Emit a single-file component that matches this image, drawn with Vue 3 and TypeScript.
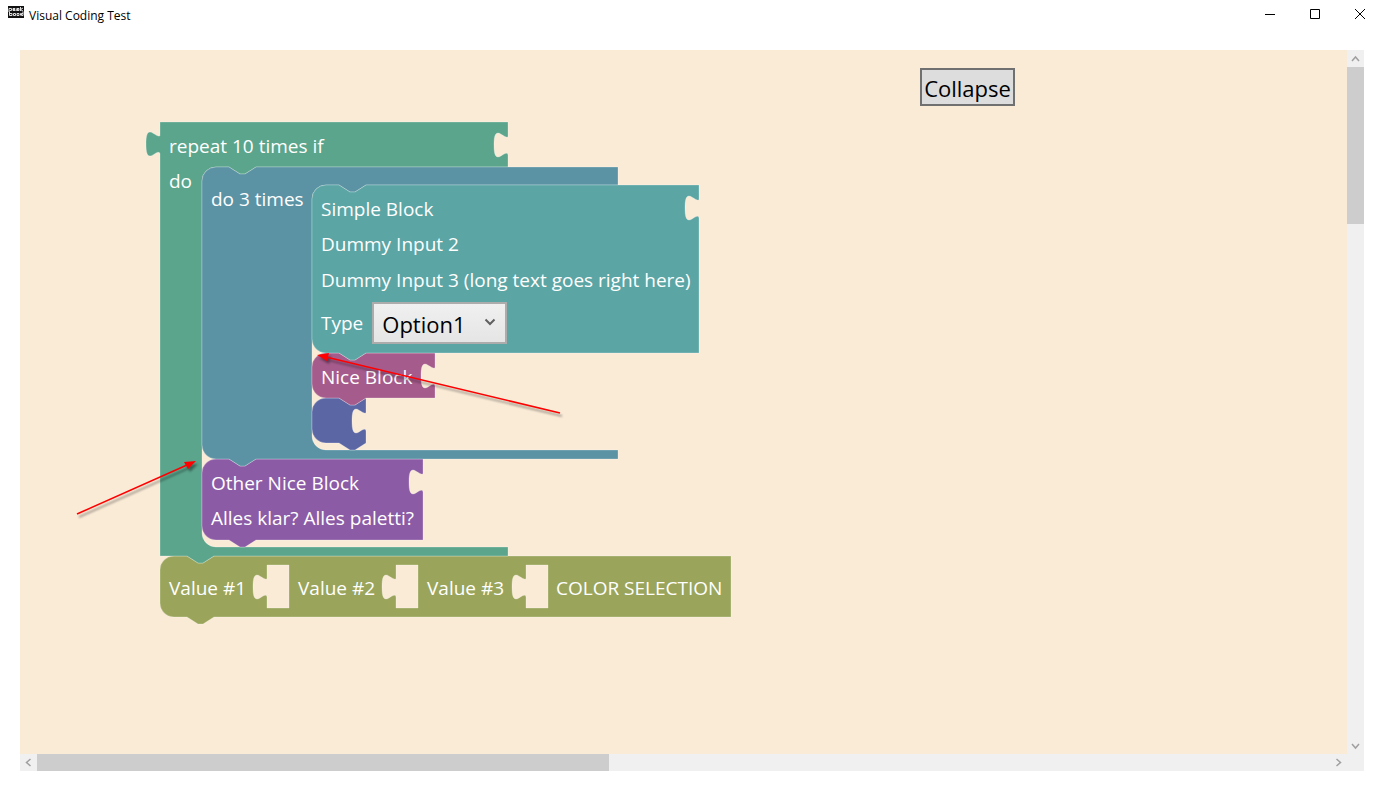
<script setup lang="ts">
import { ref } from 'vue'

interface Label { text: string; x: number; y: number }
interface Block { name: string; x: number; y: number; d: string; labels: Label[] }

// Jigsaw connector, drawn downwards and bulging to the left
const socket = 'c0,2 -2,1 -4,0 c-2,-1 -4,-3 -6,-3 c-3,0 -4,4 -4,12 c0,8 1,12 4,12 c2,0 4,-2 6,-3 c2,-1 4,-1 4,1'
// The same connector drawn upwards
const tab = 'c0,-2 -2,-2 -4,-1 c-2,1 -4,3 -6,3 c-3,0 -4,-4 -4,-12 c0,-8 1,-12 4,-12 c2,0 4,2 6,3 c2,1 4,2 4,0'
const notchRight = 'l11,7 h5 l11,-7'
const notchLeft = 'l-11,7 h-5 l-11,-7'

// Top edge with a rounded corner and a notch, up to the right side
function top(width: number): string {
  return `M0,14 A14,14 0 0 1 14,0 H27 ${notchRight} H${width}`
}

// Bottom edge with a connector pointing down and a rounded corner
function bottom(height: number): string {
  return `V${height} H54 ${notchLeft} H14 A14,14 0 0 1 0,${height - 14} Z`
}

// Opening that holds a stack of nested blocks
function cavity(left: number, from: number, to: number, width: number): string {
  return `H${left + 54} ${notchLeft} H${left + 14} A14,14 0 0 0 ${left},${from + 14} V${to - 14} A14,14 0 0 0 ${left + 14},${to} H${width}`
}

function simple(width: number, height: number): string {
  return `${top(width)} V14 ${socket} ${bottom(height)}`
}

function valueHole(x: number): string {
  return `M${x},9 H${x + 22} V52 H${x} V41 ${tab} Z`
}

const blocks: Block[] = [
  {
    name: 'repeat', x: 140, y: 72,
    d: `M0,0 H348 V14 ${socket} V45 ${cavity(42, 45, 425, 348)} V434 H54 ${notchLeft} H0 V32 ${tab} Z`,
    labels: [{ text: 'repeat 10 times if', x: 9, y: 31 }, { text: 'do', x: 9, y: 66 }],
  },
  {
    name: 'loop', x: 182, y: 117,
    d: `${top(416)} V18 ${cavity(110, 18, 283, 416)} ${bottom(292)}`,
    labels: [{ text: 'do 3 times', x: 9, y: 39 }],
  },
  {
    name: 'simple', x: 292, y: 135, d: simple(387, 168),
    labels: [
      { text: 'Simple Block', x: 9, y: 31 },
      { text: 'Dummy Input 2', x: 9, y: 66 },
      { text: 'Dummy Input 3 (long text goes right here)', x: 9, y: 102 },
    ],
  },
  { name: 'nice', x: 292, y: 303, d: simple(123, 45), labels: [{ text: 'Nice Block', x: 9, y: 31 }] },
  { name: 'empty', x: 292, y: 348, d: simple(54, 45), labels: [] },
  {
    name: 'other', x: 182, y: 409, d: simple(221, 81),
    labels: [{ text: 'Other Nice Block', x: 9, y: 31 }, { text: 'Alles klar? Alles paletti?', x: 9, y: 66 }],
  },
  {
    name: 'values', x: 140, y: 506,
    d: `${top(571)} ${bottom(61)} ${valueHole(107)} ${valueHole(236)} ${valueHole(366)}`,
    labels: [
      { text: 'Value #1', x: 9, y: 39 },
      { text: 'Value #2', x: 138, y: 39 },
      { text: 'Value #3', x: 267, y: 39 },
      { text: 'COLOR SELECTION', x: 396, y: 39 },
    ],
  },
]

// Drawn from the bottom of the stack so that connectors lie over the next block
const drawOrder = ['values', 'repeat', 'other', 'loop', 'empty', 'nice', 'simple']
const ordered = drawOrder.map((name) => blocks.find((b) => b.name === name) as Block)

const option = ref('Option1')
const collapsed = ref(false)
</script>

<template>
  <div class="window">
    <header class="titlebar">
      <svg class="logo" width="16" height="12" viewBox="0 0 16 12" aria-hidden="true">
        <rect width="16" height="12" fill="#111" />
        <g fill="none" stroke="#ddd" stroke-width="1">
          <path d="M1 6V2.500H3.500V4.500H1.500M7.500 4.500H5V2.500H7V3.500H5M8.500 2.500H11V4.500H8.500V3.500H10.500M12.500 1V5M15 2L12.500 3.500L15 5" />
          <path d="M1.500 5.500V9.500H4V7.500H1.500M5.500 7.500H7.500V9.500H5.500ZM9 7.500H11V9.500H9ZM12.500 9.500V7.500H13.500M15 5.500V9.500H13.500V7.500H15" />
        </g>
      </svg>
      <h1 class="title">Visual Coding Test</h1>
      <div class="controls">
        <button type="button" aria-label="Minimize">
          <svg width="12" height="12" viewBox="0 0 12 12"><path d="M1 6.500H11" /></svg>
        </button>
        <button type="button" aria-label="Maximize">
          <svg width="12" height="12" viewBox="0 0 12 12"><path d="M1.500 1.500H10.500V10.500H1.500Z" /></svg>
        </button>
        <button type="button" aria-label="Close">
          <svg width="12" height="12" viewBox="0 0 12 12"><path d="M1 1L11 11M11 1L1 11" /></svg>
        </button>
      </div>
    </header>

    <main class="scroller">
      <div class="canvas">
        <svg class="drawing">
          <g v-for="b in ordered" v-show="!collapsed || b.name !== 'simple'" :key="b.name" :transform="`translate(${b.x} ${b.y})`">
            <path :class="['block', b.name]" :d="b.d" fill-rule="evenodd" />
            <text v-for="l in b.labels" :key="l.text" class="label" :x="l.x" :y="l.y">{{ l.text }}</text>
          </g>
        </svg>

        <div v-show="!collapsed" class="type-field">
          <label for="type">Type</label>
          <span class="select-box">
            <select id="type" v-model="option">
              <option>Option1</option>
              <option>Option2</option>
            </select>
            <svg width="12" height="8" viewBox="0 0 12 8" aria-hidden="true"><path d="M1.500 1.500L6 6L10.500 1.500" /></svg>
          </span>
        </div>

        <button type="button" class="collapse" @click="collapsed = !collapsed">Collapse</button>

        <svg class="drawing arrows" aria-hidden="true">
          <g class="arrow">
            <path class="shaft" d="M540 363L306 307" />
            <path class="head" d="M297 305L309 303L307 311Z" />
          </g>
          <g class="arrow">
            <path class="shaft" d="M57 464L167 415" />
            <path class="head" d="M176 411L164 412L168 419Z" />
          </g>
        </svg>
      </div>

      <div class="bar vertical">
        <button type="button" aria-label="Scroll up"><svg width="9" height="9" viewBox="0 0 9 9"><path d="M1 7L4.500 3L8 7" /></svg></button>
        <div class="track"><div class="thumb"></div></div>
        <button type="button" aria-label="Scroll down"><svg width="9" height="9" viewBox="0 0 9 9"><path d="M1 3L4.500 7L8 3" /></svg></button>
      </div>
      <div class="bar horizontal">
        <button type="button" aria-label="Scroll left"><svg width="9" height="9" viewBox="0 0 9 9"><path d="M6.500 1L2.500 4.500L6.500 8" /></svg></button>
        <div class="track"><div class="thumb"></div></div>
        <button type="button" aria-label="Scroll right"><svg width="9" height="9" viewBox="0 0 9 9"><path d="M2.500 1L6.500 4.500L2.500 8" /></svg></button>
      </div>
      <div class="corner"></div>
    </main>
  </div>
</template>

<style>
body {
  margin: 0;
  background: #fff;
}
</style>

<style scoped>
.window {
  display: flex;
  flex-direction: column;
  height: 100vh;
  background: #fff;
  color: #000;
  font-family: "Open Sans", "Noto Sans", sans-serif;
}

button {
  margin: 0;
  padding: 0;
  border: 0;
  background: none;
  color: inherit;
  font-family: inherit;
}

.titlebar {
  display: flex;
  flex: none;
  height: 30px;
  padding: 0 2px 0 8px;
}

.logo {
  margin-top: 6px;
}

.title {
  margin: 0 0 0 5px;
  font-size: 12px;
  font-weight: 400;
  line-height: 32px;
}

.controls {
  display: flex;
  margin-left: auto;
}

.controls button {
  display: flex;
  align-items: center;
  justify-content: center;
  width: 45px;
  height: 28px;
}

.controls path {
  fill: none;
  stroke: #000;
}

.scroller {
  display: grid;
  flex: 1;
  grid-template-columns: minmax(0, 1fr) 17px;
  grid-template-rows: minmax(0, 1fr) 17px;
  margin: 20px;
}

.canvas {
  position: relative;
  overflow: hidden;
  background: #faebd7;
}

.drawing {
  position: absolute;
  top: 0;
  left: 0;
  width: 100%;
  height: 100%;
}

.arrows {
  pointer-events: none;
}

.block {
  stroke: rgba(255, 255, 255, 0.25);
  stroke-width: 1;
}

.repeat { fill: #5ba58c; }
.loop { fill: #5b93a5; }
.simple { fill: #5ba5a5; }
.nice { fill: #a55b8c; }
.empty { fill: #5b67a5; }
.other { fill: #8c5ba5; }
.values { fill: #9aa55b; }

.label {
  fill: #fff;
  font-size: 19px;
}

.type-field {
  position: absolute;
  top: 252px;
  left: 301px;
  display: flex;
  align-items: center;
  gap: 9px;
  color: #fff;
  font-size: 19px;
}

.select-box {
  position: relative;
}

.select-box select {
  display: block;
  width: 135px;
  height: 42px;
  padding: 4px 8px 2px;
  appearance: none;
  border: 2px solid #acacac;
  border-radius: 0;
  background: linear-gradient(#f0f0f0, #e5e5e5);
  color: #000;
  font-family: inherit;
  font-size: 22px;
}

.select-box svg {
  position: absolute;
  top: 16px;
  right: 11px;
  pointer-events: none;
}

.select-box path {
  fill: none;
  stroke: #606060;
  stroke-width: 2;
}

.collapse {
  position: absolute;
  top: 18px;
  left: 900px;
  width: 95px;
  height: 38px;
  padding-top: 2px;
  border: 2px solid #707070;
  background: #ddd;
  font-size: 22px;
  line-height: 32px;
}

.arrow {
  filter: drop-shadow(2px 3px 1px rgba(0, 0, 0, 0.4));
}

.shaft {
  fill: none;
  stroke: #f00;
  stroke-width: 1.500;
}

.head {
  fill: #f00;
}

.bar {
  display: flex;
  background: #f0f0f0;
}

.vertical {
  flex-direction: column;
}

.bar button {
  display: flex;
  flex: none;
  align-items: center;
  justify-content: center;
  width: 17px;
  height: 17px;
}

.bar path {
  fill: none;
  stroke: #a0a0a0;
  stroke-width: 1.500;
}

.track {
  flex: 1;
}

.thumb {
  background: #cdcdcd;
}

.vertical .thumb {
  height: 23.500%;
}

.horizontal .thumb {
  width: 44.200%;
  height: 100%;
}

.corner {
  background: #f0f0f0;
}
</style>
